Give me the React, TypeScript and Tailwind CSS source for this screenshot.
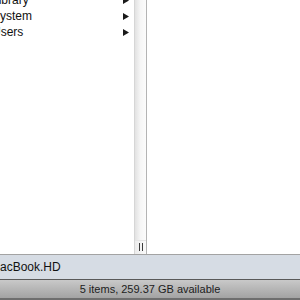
const rows = ["Library", "System", "Users"];

function Arrow() {
  return (
    <svg width="6" height="7" viewBox="0 0 6 7" className="shrink-0">
      <path d="M0 0 L6 3.5 L0 7 Z" fill="#1a1a1a" />
    </svg>
  );
}

export default function App() {
  return (
    <div className="flex h-[300px] w-[300px] flex-col overflow-hidden bg-white font-['Liberation_Sans',Arial,sans-serif] text-[#111]">
      <div className="flex h-[254px] shrink-0">
        <div className="w-[134px] shrink-0 overflow-hidden">
          <div className="-mt-[8px]">
            {rows.map((r) => (
              <div key={r} className="flex h-[16px] items-center pr-[5px] text-[12px] leading-[16px]">
                <span className="-ml-[8px] flex-1">{r}</span>
                <Arrow />
              </div>
            ))}
          </div>
        </div>
        <div className="flex w-[13px] shrink-0 flex-col justify-end border-l border-r border-l-[#d6d6d6] border-r-[#b4b4b4] bg-gradient-to-r from-[#e2e2e2] via-[#f6f6f6] to-[#fcfcfc]">
          <div className="flex h-[14px] items-start justify-center gap-[2px] border-t border-[#e4e4e4] bg-gradient-to-r from-[#ececec] to-[#fafafa] pt-[2px]">
            <div className="h-[8px] w-[1px] bg-[#3c3c3c]" />
            <div className="h-[8px] w-[1px] bg-[#3c3c3c]" />
          </div>
        </div>
        <div className="flex-1 bg-white" />
      </div>
      <div className="flex h-[25px] shrink-0 items-center border-t border-[#a3a3a3] bg-[#d6dce4] text-[12px]">
        <span className="-ml-[10px]">MacBook.HD</span>
      </div>
      <div className="flex flex-1 items-center justify-center border-t border-b-2 border-t-[#595959] border-b-[#6e6e6e] bg-gradient-to-b from-[#c9c9c9] to-[#a3a3a3] text-[11px] text-[#1c1c1c]">
        5 items, 259.37 GB available
      </div>
    </div>
  );
}
